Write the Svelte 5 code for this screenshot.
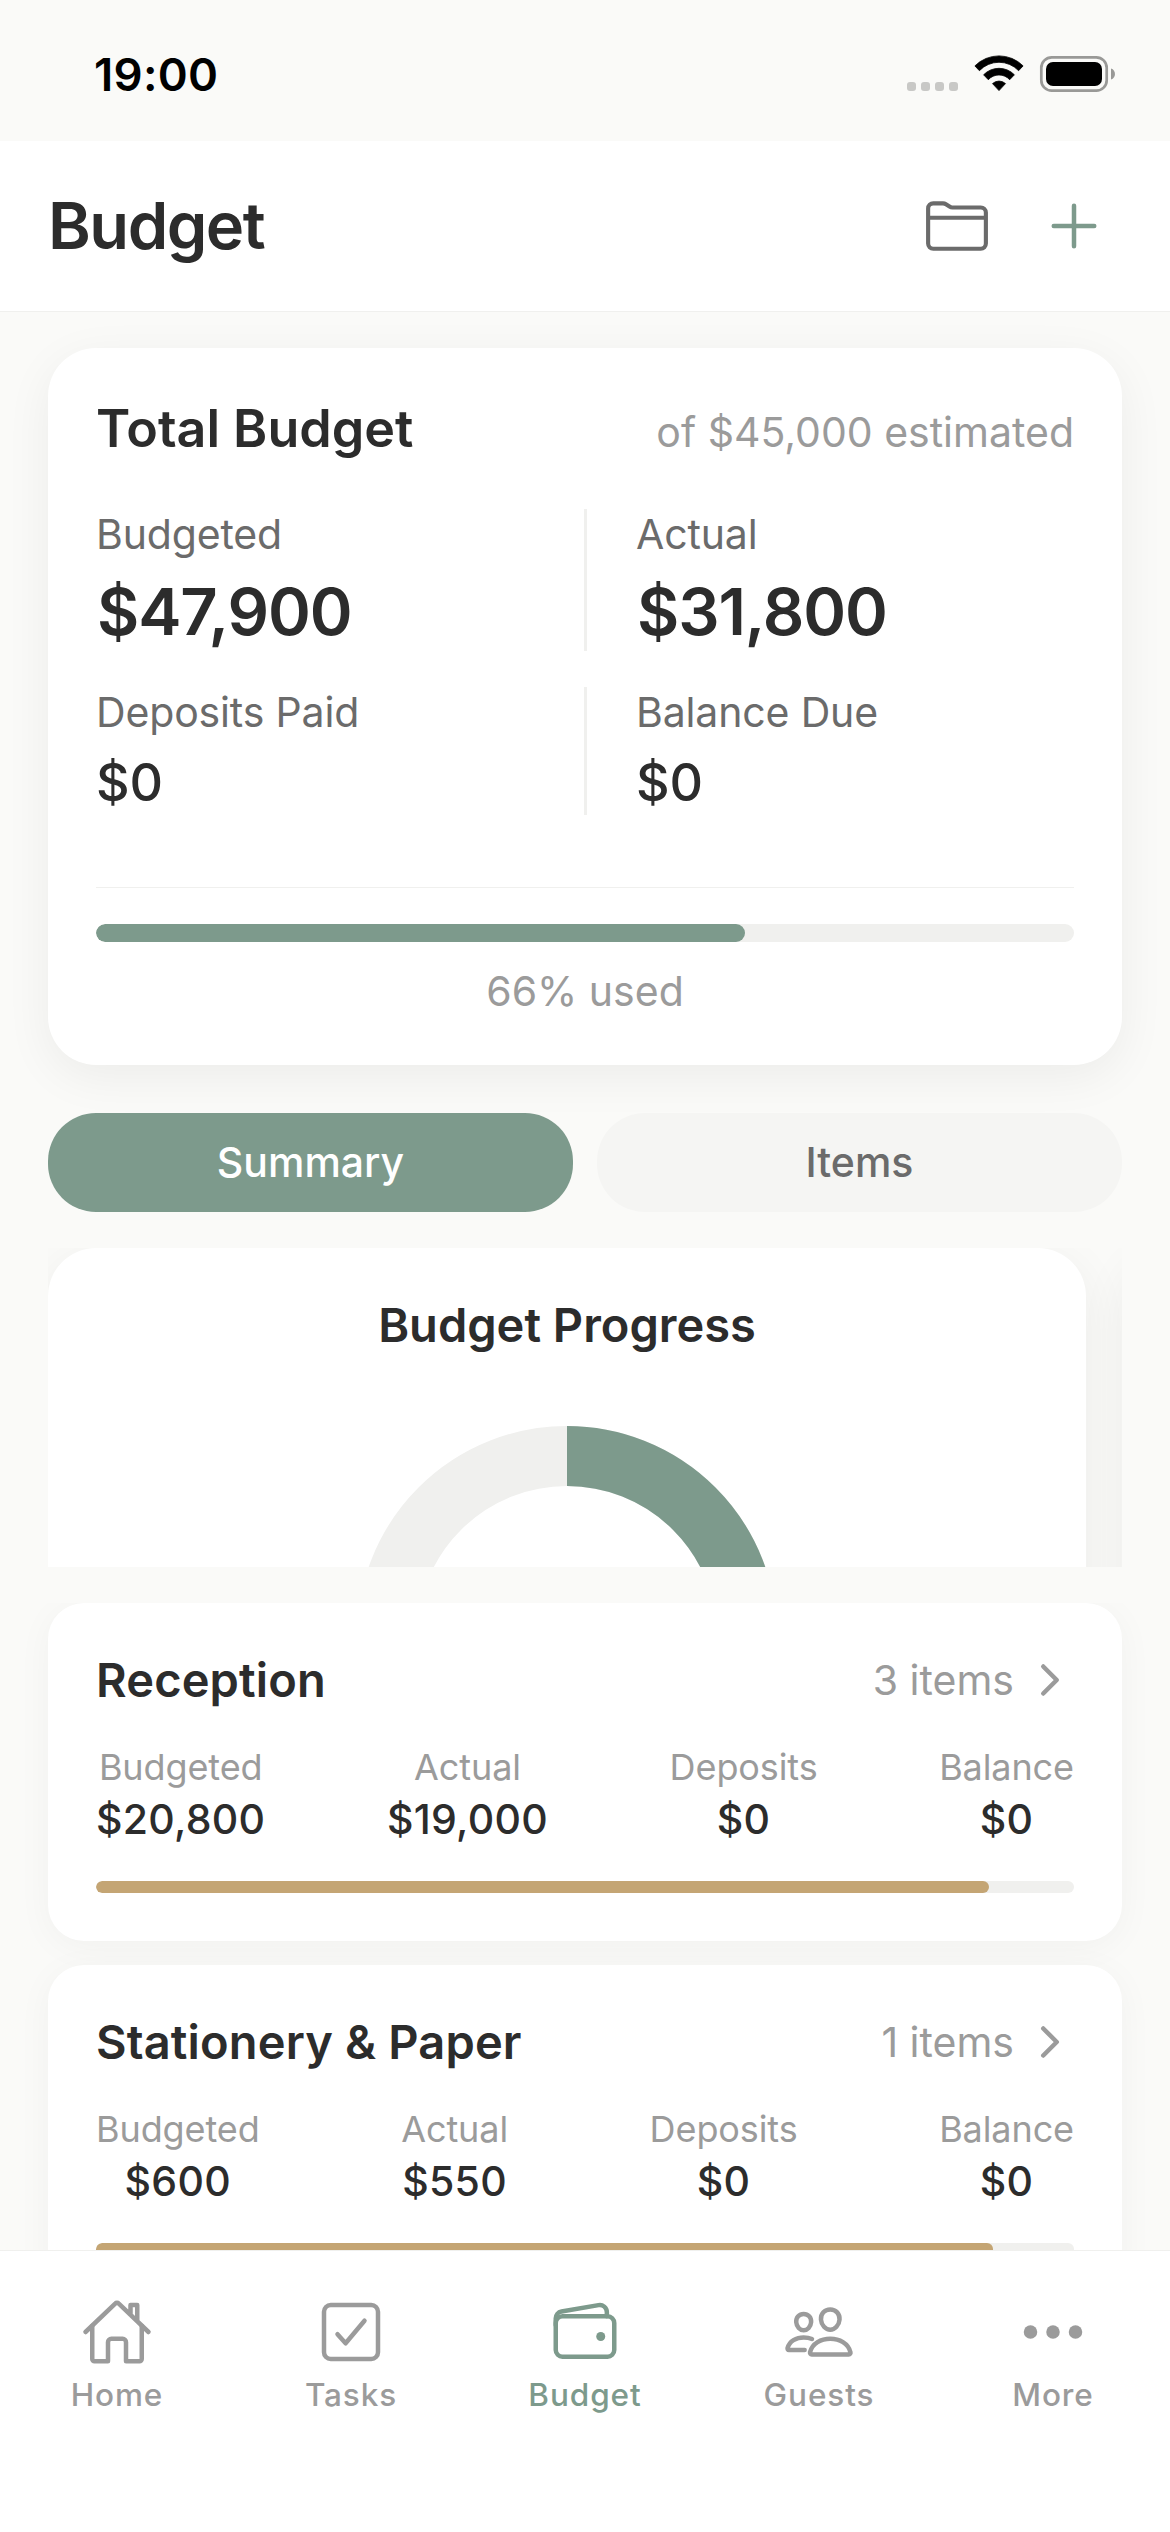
<script>
  const total = {
    estimated: 45000,
    budgeted: 47900,
    actual: 31800,
    deposits: 0,
    balance: 0
  };

  const categories = [
    { name: 'Reception', items: 3, budgeted: 20800, actual: 19000, deposits: 0, balance: 0 },
    { name: 'Stationery & Paper', items: 1, budgeted: 600, actual: 550, deposits: 0, balance: 0 }
  ];

  const tabs = ['Home', 'Tasks', 'Budget', 'Guests', 'More'];

  let view = $state('Summary');
  let activeTab = $state('Budget');

  const money = (n) => '$' + n.toLocaleString('en-US');
  const percent = (a, b) => (a / b) * 100;

  const used = percent(total.actual, total.budgeted);

  // donut: radius of the middle of the ring
  const R = 180;
  const ring = 2 * Math.PI * R;
</script>

<div class="screen">
  <div class="status">
    <span class="time">19:00</span>
    <svg class="signals" width="209" height="38" viewBox="0 0 209 38">
      <g fill="#c8c8c6">
        <rect x="0" y="27" width="9" height="9" rx="3" />
        <rect x="14" y="27" width="9" height="9" rx="3" />
        <rect x="28" y="27" width="9" height="9" rx="3" />
        <rect x="42" y="27" width="9" height="9" rx="3" />
      </g>
      <path d="M67.9 10.9A34 34 0 0 1 116.1 10.9L111.6 15.7A27 27 0 0 0 72.4 15.7Z" stroke="#000" stroke-width="0.8" stroke-linejoin="round" />
      <path d="M76.6 19.8A21.5 21.5 0 0 1 107.4 19.8L102.7 24.7A14.5 14.5 0 0 0 81.3 24.7Z" stroke="#000" stroke-width="0.8" stroke-linejoin="round" />
      <path d="M85.5 28.6A9.6 9.6 0 0 1 98.5 28.6L92 35.6Z" stroke="#000" stroke-width="0.8" stroke-linejoin="round" />
      <rect x="134.3" y="2.3" width="65.4" height="33.4" rx="10.5" fill="none" stroke="#999997" stroke-width="2.7" />
      <rect x="139" y="7" width="56" height="24" rx="7" />
      <path d="M204 13.5C209.3 15 209.3 23 204 24.5Z" fill="#999997" />
    </svg>
  </div>

  <header>
    <h1>Budget</h1>
    <div class="actions">
      <svg class="folder" viewBox="0 0 512 512">
        <path d="M440 432H72a40 40 0 01-40-40V120a40 40 0 0140-40h75.89a40 40 0 0122.19 6.72l27.84 18.56a40 40 0 0022.19 6.72H440a40 40 0 0140 40v240a40 40 0 01-40 40zM32 192h448" />
      </svg>
      <svg class="add" viewBox="0 0 512 512">
        <path d="M256 112v288M400 256H112" />
      </svg>
    </div>
  </header>

  <section class="card total">
    <div class="total-head">
      <h2>Total Budget</h2>
      <span class="estimated">of {money(total.estimated)} estimated</span>
    </div>
    <div class="figures">
      <div>
        <p class="label">Budgeted</p>
        <p class="big">{money(total.budgeted)}</p>
      </div>
      <div class="divider"></div>
      <div class="right">
        <p class="label">Actual</p>
        <p class="big">{money(total.actual)}</p>
      </div>
      <div>
        <p class="label">Deposits Paid</p>
        <p class="medium">{money(total.deposits)}</p>
      </div>
      <div class="divider"></div>
      <div class="right">
        <p class="label">Balance Due</p>
        <p class="medium">{money(total.balance)}</p>
      </div>
    </div>
    <div class="usage">
      <div class="bar"><div class="fill" style="width: {used}%"></div></div>
      <p class="used">{Math.round(used)}% used</p>
    </div>
  </section>

  <div class="switch">
    {#each ['Summary', 'Items'] as name}
      <button class:active={view === name} onclick={() => (view = name)}>{name}</button>
    {/each}
  </div>

  <div class="carousel">
    <div class="card slide">
      <h3>Budget Progress</h3>
      <svg width="420" height="420" viewBox="0 0 420 420">
        <g fill="none" stroke-width="60" transform="rotate(-90 210 210)">
          <circle cx="210" cy="210" r={R} stroke="#f0f0ee" />
          <circle cx="210" cy="210" r={R} stroke="#7d9a8c" stroke-dasharray="{(ring * used) / 100} {ring}" />
        </g>
      </svg>
    </div>
    <div class="card slide"></div>
  </div>

  <div class="list">
    {#each categories as c}
      <div class="card category">
        <div class="category-head">
          <h3>{c.name}</h3>
          <div class="count">
            <span>{c.items} items</span>
            <svg viewBox="0 0 512 512"><path d="M184 112l144 144-144 144" /></svg>
          </div>
        </div>
        <div class="stats">
          <div><span>Budgeted</span><b>{money(c.budgeted)}</b></div>
          <div><span>Actual</span><b>{money(c.actual)}</b></div>
          <div><span>Deposits</span><b>{money(c.deposits)}</b></div>
          <div><span>Balance</span><b>{money(c.balance)}</b></div>
        </div>
        <div class="bar thin"><div class="fill gold" style="width: {percent(c.actual, c.budgeted)}%"></div></div>
      </div>
    {/each}
  </div>

  <nav>
    {#each tabs as tab}
      <button class:active={activeTab === tab} onclick={() => (activeTab = tab)}>
        <svg viewBox="0 0 512 512">
          {#if tab === 'Home'}
            <path d="M80 212v236a16 16 0 0016 16h96V328a24 24 0 0124-24h80a24 24 0 0124 24v136h96a16 16 0 0016-16V212" />
            <path d="M480 256L266.89 52c-5-5.28-16.69-5.34-21.78 0L32 256M400 179V64h-48v69" />
          {:else if tab === 'Tasks'}
            <path d="M352 176L217.6 336 160 272" />
            <rect x="64" y="64" width="384" height="384" rx="48" />
          {:else if tab === 'Budget'}
            <rect x="48" y="144" width="416" height="288" rx="48" />
            <path d="M411.36 144v-30A50 50 0 00352 64.9L88.64 109.85A50 50 0 0048 159v49" />
            <circle class="dot" cx="368" cy="288" r="32" />
          {:else if tab === 'Guests'}
            <path d="M402 168c-2.93 40.67-33.1 72-66 72s-63.12-31.32-66-72c-3-42.31 26.37-72 66-72s69 30.46 66 72z" />
            <path d="M336 304c-65.17 0-127.84 32.37-143.54 95.41-2.08 8.34 3.15 16.59 11.72 16.59h263.65c8.57 0 13.77-8.25 11.72-16.59C463.85 335.36 401.18 304 336 304z" />
            <path d="M200 185.94c-2.34 32.48-26.72 58.06-53 58.06s-50.7-25.57-53-58.06C91.61 152.15 115.34 128 147 128s55.39 24.77 53 57.94z" />
            <path d="M206 306c-18.05-8.27-37.93-11.45-59-11.45-52 0-102.1 25.85-114.65 76.2-1.65 6.66 2.53 13.25 9.37 13.25H154" />
          {:else}
            <circle class="dot" cx="96" cy="256" r="48" />
            <circle class="dot" cx="256" cy="256" r="48" />
            <circle class="dot" cx="416" cy="256" r="48" />
          {/if}
        </svg>
        <span>{tab}</span>
      </button>
    {/each}
  </nav>
</div>

<style>
  :global(body) {
    margin: 0;
    background: #fafaf8;
  }

  .screen {
    width: 1170px;
    height: 2532px;
    display: flex;
    flex-direction: column;
    overflow: hidden;
    background: #fafaf8;
    color: #2c2c2c;
    font-family: Inter, 'Liberation Sans', sans-serif;
  }

  h1, h2, h3, p {
    margin: 0;
    font-weight: 600;
  }

  button {
    border: 0;
    padding: 0;
    background: none;
    font-family: inherit;
  }

  /* status bar */
  .status {
    display: flex;
    flex: none;
    justify-content: space-between;
    align-items: flex-start;
    height: 141px;
    padding: 0 54px 0 94px;
    box-sizing: border-box;
    color: #000;
  }

  .time {
    margin-top: 45px;
    font-size: 45.5px;
    line-height: 60px;
    font-weight: 600;
    letter-spacing: 0.3px;
  }

  .signals {
    margin-top: 55px;
  }

  header {
    display: flex;
    flex: none;
    justify-content: space-between;
    align-items: center;
    height: 170px;
    padding: 0 60px 0 48px;
    background: #fff;
    border-bottom: 1px solid #f0f0ee;
  }

  h1 {
    font-size: 65px;
    line-height: 80px;
    letter-spacing: -1.5px;
  }

  .actions {
    display: flex;
    align-items: center;
    gap: 48px;
  }

  .actions svg {
    fill: none;
    stroke-width: 32;
    stroke-linecap: round;
    stroke-linejoin: round;
  }

  .folder {
    width: 66px;
    height: 66px;
    stroke: #6b6b6b;
  }

  .add {
    width: 72px;
    height: 72px;
    stroke: #7d9a8c;
  }

  .card {
    background: #fff;
    border-radius: 48px;
    box-shadow: 0 12px 48px rgba(0, 0, 0, 0.06);
  }

  /* total budget */
  .total {
    flex: none;
    margin: 36px 48px 0;
    padding: 48px;
  }

  .total-head {
    display: flex;
    justify-content: space-between;
    align-items: flex-end;
  }

  h2 {
    font-size: 52px;
    line-height: 66px;
  }

  .estimated {
    font-size: 41px;
    line-height: 60px;
    color: #9b9b9b;
  }

  .figures {
    display: grid;
    grid-template-columns: 488px 3px 1fr;
    row-gap: 36px;
    margin-top: 47px;
  }

  .divider {
    background: #f0f0ee;
  }

  .right {
    padding-left: 49px;
  }

  .label {
    margin-bottom: 13px;
    font-size: 41px;
    line-height: 50px;
    font-weight: 400;
    letter-spacing: -0.15px;
    color: #6b6b6b;
  }

  .big {
    font-size: 65px;
    line-height: 79px;
    letter-spacing: -1.1px;
    text-indent: 1px;
  }

  .medium {
    padding-top: 1px;
    font-size: 52px;
    line-height: 64px;
    font-weight: 500;
  }

  .usage {
    margin-top: 72px;
    padding-top: 36px;
    border-top: 1px solid #f0f0ee;
  }

  .bar {
    height: 18px;
    border-radius: 9px;
    background: #f0f0ee;
    overflow: hidden;
  }

  .fill {
    height: 100%;
    border-radius: 9px;
    background: #7d9a8c;
  }

  .gold {
    background: #c4a574;
  }

  .used {
    margin-top: 24px;
    font-size: 41px;
    line-height: 51px;
    font-weight: 400;
    text-align: center;
    color: #9b9b9b;
  }

  /* summary / items */
  .switch {
    display: flex;
    flex: none;
    gap: 24px;
    margin: 48px 48px 36px;
  }

  .switch button {
    flex: 1;
    height: 99px;
    padding-bottom: 1px;
    border-radius: 48px;
    background: #f5f5f3;
    color: #6b6b6b;
    font-size: 41px;
    font-weight: 500;
  }

  .switch button.active {
    background: #7d9a8c;
    color: #fff;
  }

  .carousel {
    display: flex;
    flex: none;
    gap: 36px;
    height: 319px;
    margin: 0 48px 36px;
    overflow: hidden;
  }

  .slide {
    display: flex;
    flex: none;
    flex-direction: column;
    align-items: center;
    width: 1038px;
    height: 720px;
    padding-top: 48px;
    box-sizing: border-box;
  }

  h3 {
    font-size: 47px;
    line-height: 58px;
  }

  .slide svg {
    margin-top: 72px;
  }

  /* categories */
  .list {
    flex: 1;
    min-height: 0;
    padding: 0 48px;
    overflow: hidden;
  }

  .category {
    margin-bottom: 24px;
    padding: 48px;
    border-radius: 36px;
    box-shadow: 0 6px 36px rgba(0, 0, 0, 0.04);
  }

  .category h3 {
    letter-spacing: 0.15px;
  }

  .category-head, .count, .stats {
    display: flex;
    justify-content: space-between;
    align-items: center;
  }

  .count {
    gap: 12px;
    font-size: 41px;
    color: #9b9b9b;
  }

  .count svg {
    width: 48px;
    height: 48px;
    fill: none;
    stroke: #9b9b9b;
    stroke-width: 48;
    stroke-linecap: round;
    stroke-linejoin: round;
  }

  .stats {
    margin: 36px 0 37px;
  }

  .stats div {
    display: flex;
    flex-direction: column;
    align-items: center;
    gap: 6px;
  }

  .stats span {
    font-size: 36px;
    line-height: 44px;
    letter-spacing: -0.1px;
    color: #9b9b9b;
  }

  .stats b {
    font-size: 41px;
    line-height: 49px;
    font-weight: 500;
    letter-spacing: 0.3px;
  }

  .thin {
    height: 12px;
    border-radius: 6px;
  }

  /* bottom tabs */
  nav {
    display: flex;
    flex: none;
    height: 281px;
    border-top: 1px solid #f0f0ee;
    background: #fff;
  }

  nav button {
    display: flex;
    flex: 1;
    flex-direction: column;
    align-items: center;
    padding-top: 45px;
    color: #9b9b9b;
  }

  nav button.active {
    color: #7d9a8c;
  }

  nav svg {
    width: 72px;
    height: 72px;
    fill: none;
    stroke: currentColor;
    stroke-width: 32;
    stroke-linecap: round;
    stroke-linejoin: round;
  }

  nav .dot {
    fill: currentColor;
    stroke: none;
  }

  nav span {
    margin-top: 7px;
    font-size: 31.5px;
    line-height: 40px;
    font-weight: 500;
    letter-spacing: 0.9px;
  }
</style>
